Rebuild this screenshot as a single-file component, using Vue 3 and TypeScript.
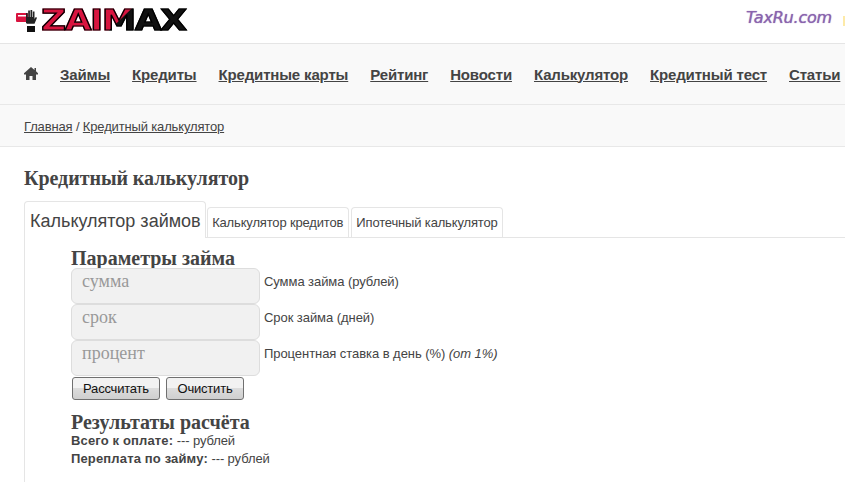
<script setup lang="ts">
const nav: string[] = ['Займы', 'Кредиты', 'Кредитные карты', 'Рейтинг', 'Новости', 'Калькулятор', 'Кредитный тест', 'Статьи']
const fields = [
  { ph: 'сумма', label: 'Сумма займа (рублей)', note: '' },
  { ph: 'срок', label: 'Срок займа (дней)', note: '' },
  { ph: 'процент', label: 'Процентная ставка в день (%) ', note: '(от 1%)' },
]
</script>

<template>
  <div class="page">
    <header class="top">
      <div class="logo">
        <svg class="hand" width="24" height="24" viewBox="0 0 24 24">
          <rect x="0" y="4" width="12" height="9" rx="1" fill="#d8143f" />
          <rect x="2" y="6" width="8" height="1.500" fill="#fff" />
          <path d="M10 14V4h1.600v4h.6V1.500h1.700V8h.6V1h1.700v7h.6V2.500h1.700V10l1.300-2 1.200.8-2.500 6H11z" fill="#222" />
          <rect x="11" y="17" width="8" height="6" fill="#111" />
        </svg>
        <span class="wordmark">ZAIMAX</span>
      </div>
      <span class="taxru">TaxRu.com</span>
      <span class="edge"></span>
    </header>

    <nav class="nav">
      <svg class="home" width="14" height="13" viewBox="0 0 14 13">
        <path d="M7 0l3.500 3V1H12v3.300L14 6.200v1.200h-2V13H8.500V9h-3v4H2V7.400H0V6.200z" fill="#444" />
      </svg>
      <a v-for="n in nav" :key="n" class="nav-link">{{ n }}</a>
    </nav>

    <div class="crumbs"><a>Главная</a> / <a>Кредитный калькулятор</a></div>

    <main class="main">
      <h1 class="title">Кредитный калькулятор</h1>
      <div class="tabs">
        <div class="tab active">Калькулятор займов</div>
        <div class="tab">Калькулятор кредитов</div>
        <div class="tab">Ипотечный калькулятор</div>
      </div>
      <section class="panel">
        <h2 class="sub">Параметры займа</h2>
        <div v-for="f in fields" :key="f.ph" class="row">
          <div class="input">{{ f.ph }}</div>
          <span class="label">{{ f.label }}<em v-if="f.note">{{ f.note }}</em></span>
        </div>
        <div class="buttons">
          <button class="btn">Рассчитать</button>
          <button class="btn">Очистить</button>
        </div>
        <h2 class="sub results">Результаты расчёта</h2>
        <p class="line"><b>Всего к оплате:</b> --- рублей</p>
        <p class="line"><b>Переплата по займу:</b> --- рублей</p>
      </section>
    </main>
  </div>
</template>

<style>
html, body { margin: 0; background: #fff; overflow: hidden; }
</style>

<style scoped>
.page { width: 845px; height: 482px; overflow: hidden; font-family: "Liberation Sans", Arial, sans-serif; color: #444; }
.top { height: 43px; border-bottom: 1px solid #e5e5e5; display: flex; align-items: flex-start; background: #fff; }
.logo { display: flex; align-items: center; margin: 8px auto 0 16px; height: 25px; }
.hand { flex: none; }
.wordmark {
  font: 900 29px/25px "DejaVu Sans", sans-serif;
  display: inline-block;
  transform: scaleX(1.18);
  transform-origin: left center;
  letter-spacing: -0.9px;
  -webkit-text-stroke: 1.2px #000;
  padding: 0 1px;
  background: linear-gradient(131deg, #d8143f 0 53%, #111 53.500% 100%);
  -webkit-background-clip: text;
  background-clip: text;
  color: transparent;
}
.taxru { font: italic 16px/18px "DejaVu Sans", sans-serif; color: #8a64ae; margin: 9px 11px 0 0; letter-spacing: -0.2px; text-shadow: 0 0 1px #8a64ae; }
.edge { width: 2px; height: 10px; margin-top: 16px; background: #fdeaa8; flex: none; }
.nav { height: 60px; background: #f9f9f9; border-bottom: 1px solid #e8e8e8; display: flex; align-items: center; padding-left: 24px; white-space: nowrap; }
.home { margin-right: 22px; margin-top: -2px; flex: none; }
.nav-link { font-size: 15px; font-weight: 700; color: #444; text-decoration: underline; margin-right: 22px; letter-spacing: -0.16px; flex: none; }
.crumbs { height: 41px; line-height: 44px; padding-left: 24px; font-size: 13px; letter-spacing: -0.15px; background: #f9f9f9; border-bottom: 1px solid #e8e8e8; color: #444; }
.crumbs a { text-decoration: underline; }
.main { padding: 0 0 0 24px; }
.title { font: 700 20px/24px "Liberation Serif", serif; letter-spacing: -0.05px; color: #444; margin: 19px 0 0; }
.tabs { display: flex; align-items: flex-end; margin-top: 11px; height: 36px; }
.tab { font-size: 13px; letter-spacing: -0.16px; line-height: 30px; height: 30px; border: 1px solid #e5e5e5; border-bottom: 0; border-radius: 4px 4px 0 0; padding: 0 4.500px; margin-right: 2px; box-sizing: border-box; color: #444; white-space: nowrap; }
.tab.active { font-size: 18px; letter-spacing: 0; line-height: 38px; height: 37px; padding: 0 4px 0 5px; background: #fff; position: relative; z-index: 1; margin-right: 1px; margin-bottom: -1px; }
.panel { border-top: 1px solid #e5e5e5; border-left: 1px solid #e5e5e5; padding: 11px 0 0 46px; height: 240px; }
.sub { font: 700 20px/19px "Liberation Serif", serif; color: #444; margin: 0; }
.row { display: flex; align-items: center; height: 36px; }
.input { width: 189px; height: 36px; box-sizing: border-box; background: #f1f1f1; border: 1px solid #ddd; border-radius: 6px; font: 18px/24px "Liberation Serif", serif; color: #999; padding: 0 0 0 10px; flex: none; }
.label { font-size: 13px; letter-spacing: -0.06px; margin-left: 4px; margin-top: -10px; }
.label em { font-style: italic; }
.buttons { display: flex; gap: 6px; margin-top: 1px; padding-left: 1px; }
.btn { width: 88px; height: 23px; padding: 0; font: 13px "Liberation Sans", sans-serif; letter-spacing: -0.2px; color: #111; border: 1px solid #707070; border-radius: 3px; background: linear-gradient(#f2f2f2 0 50%, #dcdcdc 50%, #cfcfcf 100%); }
.btn:last-child { width: 78px; }
.results { margin-top: 13px; }
.line { font-size: 13px; letter-spacing: -0.1px; line-height: 18px; margin: 0; color: #444; }
.line b { font-weight: 700; letter-spacing: 0.15px; }
</style>
